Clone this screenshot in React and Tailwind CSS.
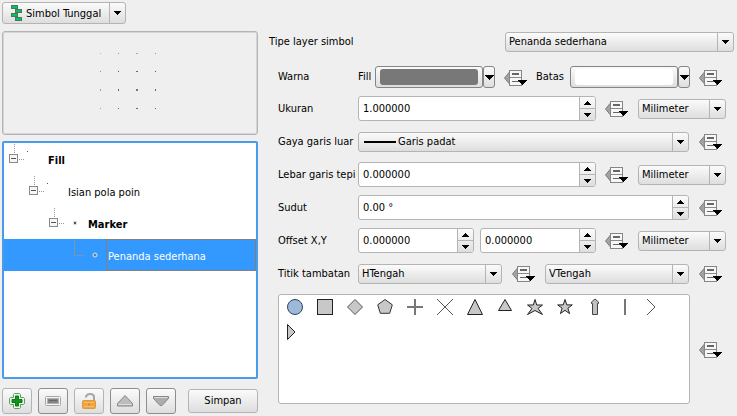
import React, { useState } from "react";

const FACE = "bg-gradient-to-b from-[#fbfbfb] to-[#dedede]";

function Caret({ up = false }) {
  return (
    <svg width="7" height="4" viewBox="0 0 7 4" shapeRendering="crispEdges" aria-hidden="true">
      <path d={up ? "M3 0h1v1h1v1h1v1h1v1h-7v-1h1v-1h1v-1h1z" : "M0 0h7v1h-1v1h-1v1h-1v1h-1v-1h-1v-1h-1v-1h-1z"} fill="#000" />
    </svg>
  );
}

function Combo({ label, value, className = "", line = false }) {
  return (
    <div className={`pt-px ${className}`}>
      <div className={`relative h-5 rounded-[3px] border border-[#b4b4b4] ${FACE}`}>
        <select
          aria-label={label}
          className={`block h-full w-full appearance-none bg-transparent pr-5 outline-none ${line ? "pl-[39px]" : "pl-[3px]"}`}
        >
          <option>{value}</option>
        </select>
        {line && <span className="pointer-events-none absolute left-[5px] top-2 h-[2px] w-8 bg-black" />}
        <span className="pointer-events-none absolute inset-y-0 right-0 flex w-4 items-center justify-center border-l border-[#b4b4b4]">
          <Caret />
        </span>
      </div>
    </div>
  );
}

function Spin({ id, label, value }) {
  return (
    <div className="flex h-[25px] min-w-0 flex-1 overflow-hidden rounded-[3px] border border-[#b4b4b4] bg-white">
      <input id={id} aria-label={label} defaultValue={value} className="w-0 min-w-0 flex-1 pl-1 pt-px outline-none" />
      <div className={`flex w-4 flex-col border-l border-[#b4b4b4] ${FACE}`}>
        <button aria-label="Naik" className="flex flex-1 items-center justify-center border-b border-[#b4b4b4]">
          <Caret up />
        </button>
        <button aria-label="Turun" className="flex flex-1 items-center justify-center">
          <Caret />
        </button>
      </div>
    </div>
  );
}

function DataDefined() {
  return (
    <button aria-label="Penggantian data terdefinisi" className="shrink-0 pt-px">
      <svg width="23" height="16" viewBox="0 0 23 16" shapeRendering="crispEdges" className="block">
        <path d="M5.5 2L.5 8L5.5 14z" fill="#a2a2a2" stroke="#7c7c7c" shapeRendering="auto" />
        <rect x="5.5" y=".5" width="12" height="15" fill="#f7f7f7" stroke="#858585" />
        <rect x="8" y="3" width="7" height="2" fill="#666" />
        <rect x="6" y="7" width="11" height="1" fill="#8a8a8a" />
        <rect x="8" y="11" width="7" height="1" fill="#666" />
        <path d="M14 10h9v1h-1v1h-1v1h-1v1h-1v1h-1v-1h-1v-1h-1v-1h-1v-1h-1z" fill="#000" />
      </svg>
    </button>
  );
}

function ColorButton({ label, swatch }) {
  return (
    <div className="flex h-[22px] min-w-0 flex-1">
      <button aria-label={label} className={`min-w-0 flex-1 rounded-[3px] border border-[#858585] px-1 py-[2px] ${FACE}`}>
        <span className={`block h-4 rounded-[3px] ${swatch}`} />
      </button>
      <button
        aria-label={`${label} menu`}
        className={`flex w-3 items-center justify-center rounded-[3px] border border-[#858585] ${FACE}`}
      >
        <svg width="9" height="5" viewBox="0 0 9 5" shapeRendering="crispEdges" className="shrink-0" aria-hidden="true">
          <path d="M0 0h9v1h-1v1h-1v1h-1v1h-1v1h-1v-1h-1v-1h-1v-1h-1v-1h-1z" />
        </svg>
      </button>
    </div>
  );
}

function Row({ label, htmlFor, children }) {
  return (
    <div className="flex h-[33px] items-center">
      <label htmlFor={htmlFor} className="w-20 shrink-0 pt-px">
        {label}
      </label>
      {children}
    </div>
  );
}

const TREE = [
  { name: "Fill", bold: true, indent: "pl-0", dot: "tiny" },
  { name: "Isian pola poin", bold: false, indent: "pl-5", dot: "tiny" },
  { name: "Marker", bold: true, indent: "pl-10", dot: "small" },
  { name: "Penanda sederhana", bold: false, indent: "pl-[60px]", dot: "ring", leaf: true },
];

function Branch({ leaf, dot }) {
  return (
    <svg width="42" height="32" viewBox="0 0 42 32" shapeRendering="crispEdges" className="shrink-0" aria-hidden="true">
      {leaf ? (
        <path d="M10.5 1v15.500h10" fill="none" stroke="#b5936b" strokeDasharray="1 1" />
      ) : (
        <>
          <path d="M10.500 1v10M15 16.500h6" fill="none" stroke="#9a9a9a" strokeDasharray="1 1" />
          <rect x="5.500" y="11.500" width="8" height="8" rx="1" fill="#f6f6f6" stroke="#8a8a8a" />
          <rect x="7" y="15" width="5" height="1" fill="#555" />
        </>
      )}
      {dot === "tiny" && <rect x="23" y="8" width="1" height="1" fill="#555" />}
      {dot === "small" && (
        <>
          <rect x="29" y="14" width="4" height="4" fill="#dcdcdc" />
          <rect x="30" y="15" width="2" height="2" fill="#555" />
        </>
      )}
      {dot === "ring" && <circle cx="31" cy="16" r="2" fill="#5c7f9f" stroke="#d5e6f7" shapeRendering="auto" />}
    </svg>
  );
}

const DOTS = [
  [100, 22, 1, 1, "#b5b5b5"], [118, 22, 1, 1, "#909090"], [136, 22, 2, 1, "#a5a5a5"], [155, 22, 1, 1, "#909090"],
  [100, 40, 1, 1, "#909090"], [118, 40, 1, 1, "#555"], [136, 40, 2, 1, "#666"], [155, 40, 1, 1, "#555"],
  [100, 58, 1, 2, "#a5a5a5"], [118, 58, 1, 2, "#666"], [136, 58, 2, 2, "#777"], [155, 58, 1, 2, "#666"],
  [100, 77, 1, 1, "#a0a0a0"], [118, 77, 1, 1, "#666"], [136, 77, 2, 1, "#666"], [155, 77, 1, 1, "#666"],
];

const GREY = { fill: "#c8c8c8", stroke: "#222" };
const MARKERS = [
  ["Lingkaran", <circle cx="10" cy="10" r="7.500" fill="#9cb9d9" stroke="#2b4566" />],
  ["Persegi", <rect x="2.500" y="2.500" width="15" height="15" {...GREY} shapeRendering="crispEdges" />],
  ["Belah ketupat", <path d="M10 2.500L17.500 10L10 17.500L2.500 10z" {...GREY} stroke="#555" />],
  ["Segi lima", <path d="M10 2.500L17.300 7.800L14.700 16.300H5.300L2.700 7.800z" {...GREY} stroke="#333" />],
  ["Plus", <path d="M10 2v16M2 10h16" stroke="#777" strokeWidth="2" />],
  ["Silang", <path d="M2 2L18 18M18 2L2 18" stroke="#555" />],
  ["Segitiga", <path d="M10 2.500L17.500 17.500H2.500z" {...GREY} />],
  ["Segitiga sama sisi", <path d="M10 2.500L16.500 13.500H3.500z" {...GREY} />],
  ["Bintang", <path d="M10 2.500L11.700 8H17.500L13 11.500L17.500 17.500L10 13.500L2.500 17.500L7 11.500L2.500 8H8.300z" {...GREY} />],
  ["Bintang biasa", <path d="M10 2.500L11.800 7.900H17.300L12.900 11.200L14.600 16.600L10 13.300L5.400 16.600L7.100 11.200L2.700 7.900H8.200z" {...GREY} />],
  ["Panah", <path d="M10 2L13.500 5V6.500H12.500V17.500H7.500V6.500H6.500V5z" {...GREY} fill="#c0c0c0" stroke="#444" />],
  ["Garis", <path d="M10 2v16" stroke="#777" strokeWidth="2" />],
  ["Kepala panah", <path d="M2 2L10 10L2 18" fill="none" stroke="#555" />],
  ["Kepala panah terisi", <path d="M2.500 2.500L10 10L2.500 17.500z" {...GREY} />],
];

const TOOLS = [
  ["Tambah", "border-[#b4b4b4]",
    <>
      <path d="M5.500 .5h5l1 1v3h3l1 1v5l-1 1h-3v3l-1 1h-5l-1-1v-3h-3l-1-1v-5l1-1h3v-3z" fill="#e6f3e6" stroke="#5e9a64" />
      <path d="M6.500 3h3v3.500h3.500v3h-3.500v3.500h-3v-3.500h-3.500v-3h3.500z" fill="#12911b" stroke="#08790f" />
    </>],
  ["Hapus", "border-[#8e8e8e]",
    <>
      <rect x=".5" y="3.500" width="15" height="9" rx="1" fill="#f4f4f4" stroke="#a6a6a6" />
      <rect x="2.500" y="5.500" width="11" height="5" fill="#858585" stroke="#b0b0b0" />
      <path d="M4 7.500h8" stroke="#666" />
    </>],
  ["Kunci", "border-[#b4b4b4]",
    <>
      <path d="M5 4.500V3.500Q6 1 9 1Q13 1 13 4V8" fill="none" stroke="#a6a6a6" strokeWidth="2" />
      <rect x="1.500" y="7.500" width="13" height="8" rx="1" fill="#efa542" stroke="#dc9a3c" />
      <path d="M3 9.500h10M3 13.500h10" stroke="#f5bd6c" />
      <rect x="7" y="10" width="2" height="3" fill="#dd922c" />
    </>],
  ["Ke atas", "border-[#8e8e8e]",
    <>
      <path d="M8 2.500L15.500 10.500V13H.5V10.500z" fill="#bdbdbd" stroke="#858585" />
      <path d="M1.500 11.500h13" stroke="#dedede" />
    </>],
  ["Ke bawah", "border-[#8e8e8e]",
    <>
      <path d="M.5 3.500H15.500V5.500L9 12.500H7L.5 5.500z" fill="#adadad" stroke="#858585" />
      <path d="M1.500 4.500h13" stroke="#dedede" />
    </>],
];

export default function App() {
  const [selected, setSelected] = useState(3);
  const [marker, setMarker] = useState(0);

  return (
    <main className="flex min-h-screen bg-[#efefef] font-['DejaVu_Sans_Condensed','DejaVu_Sans',sans-serif] text-[11px] leading-4 text-black [font-stretch:condensed]">
      <section className="flex w-[258px] shrink-0 flex-col pb-[2px] pl-[2px] pt-[2px]">
        <div className={`relative h-[22px] w-[124px] rounded-[3px] border border-[#b4b4b4] ${FACE}`}>
          <select aria-label="Jenis simbol" className="block h-full w-full appearance-none bg-transparent pl-[23px] pt-px outline-none">
            <option>Simbol Tunggal</option>
          </select>
          <svg width="11" height="16" viewBox="0 0 11 16" shapeRendering="crispEdges" className="pointer-events-none absolute left-2 top-[2px]">
            <g fill="#10bb62" stroke="#3f7f5c">
              <rect x=".5" y=".5" width="6" height="3" />
              <rect x="4.500" y="4.500" width="6" height="3" />
              <rect x=".5" y="8.500" width="6" height="3" />
              <rect x="4.500" y="12.500" width="6" height="3" />
            </g>
          </svg>
          <span className="pointer-events-none absolute inset-y-0 right-0 flex w-4 items-center justify-center border-l border-[#b4b4b4]">
            <Caret />
          </span>
        </div>

        <div className="mt-[7px] flex h-[104px] justify-center rounded-[3px] border border-[#b4b4b4] p-px shadow-[inset_0_0_0_1px_#d6d6d6]">
          <svg width="252" height="100" viewBox="0 0 252 100" shapeRendering="crispEdges" role="img" aria-label="Pratinjau simbol">
            {DOTS.map(([x, y, w, h, c], i) => (
              <rect key={i} x={x - 4} y={y - 2} width={w} height={h} fill={c} />
            ))}
          </svg>
        </div>

        <ul className="mt-[6px] flex-1 rounded-[2px] border-2 border-[#4a9ceb] bg-white" role="tree">
          {TREE.map((node, i) => (
            <li key={node.name} role="treeitem" aria-selected={selected === i}>
              <button
                onClick={() => setSelected(i)}
                className={`flex h-8 w-full text-left ${node.indent} ${selected === i ? "bg-[#3399ff] text-white" : ""}`}
              >
                <Branch leaf={node.leaf} dot={node.dot} />
                <span
                  className={`flex h-full flex-1 items-center border border-dotted pl-px pt-[3px] ${selected === i ? "border-[#cc6600]" : "border-transparent"} ${node.bold ? "font-bold" : ""}`}
                >
                  {node.name}
                </span>
              </button>
            </li>
          ))}
        </ul>

        <div className="mt-[9px] flex items-center gap-[6px]">
          {TOOLS.map(([name, border, art]) => (
            <button
              key={name}
              aria-label={name}
              className={`flex h-[26px] w-[30px] items-center justify-center rounded-[3px] border ${border} ${FACE}`}
            >
              <svg width="16" height="16" viewBox="0 0 16 16">{art}</svg>
            </button>
          ))}
          <button className={`ml-[6px] h-6 flex-1 rounded-[3px] border border-[#b4b4b4] ${FACE}`}>Simpan</button>
        </div>
      </section>

      <section className="min-w-0 flex-1 pl-5 pr-[11px] pt-[31px]">
        <div className="-ml-[9px] -mr-2 flex items-center">
          <span className="flex-1 pt-px">Tipe layer simbol</span>
          <Combo label="Tipe layer simbol" value="Penanda sederhana" className="w-[229px]" />
        </div>

        <div className="mb-1 mt-[14px] flex items-center">
          <span className="w-20 shrink-0">Warna</span>
          <span className="w-[17px] shrink-0">Fill</span>
          <ColorButton label="Warna fill" swatch="bg-[#787878]" />
          <div className="mx-[9px] flex">
            <DataDefined />
          </div>
          <span className="w-[34px] shrink-0">Batas</span>
          <ColorButton label="Warna batas" swatch="bg-white" />
          <div className="ml-[9px] flex w-[27px]">
            <DataDefined />
          </div>
        </div>

        <Row label="Ukuran" htmlFor="ukuran">
          <Spin id="ukuran" value="1.000000" />
          <div className="ml-[9px] mr-[10px] flex">
            <DataDefined />
          </div>
          <Combo label="Satuan ukuran" value="Milimeter" className="w-[88px]" />
        </Row>
        <Row label="Gaya garis luar">
          <Combo label="Gaya garis luar" value="Garis padat" className="min-w-0 flex-1" line />
          <div className="ml-[10px] flex w-[27px]">
            <DataDefined />
          </div>
        </Row>
        <Row label="Lebar garis tepi" htmlFor="lebar">
          <Spin id="lebar" value="0.000000" />
          <div className="ml-[9px] mr-[10px] flex">
            <DataDefined />
          </div>
          <Combo label="Satuan lebar" value="Milimeter" className="w-[88px]" />
        </Row>
        <Row label="Sudut" htmlFor="sudut">
          <Spin id="sudut" value="0.00 °" />
          <div className="ml-[10px] flex w-[27px]">
            <DataDefined />
          </div>
        </Row>
        <Row label="Offset X,Y" htmlFor="offset-x">
          <div className="flex min-w-0 flex-1 gap-[6px]">
            <Spin id="offset-x" value="0.000000" />
            <Spin id="offset-y" label="Offset Y" value="0.000000" />
          </div>
          <div className="ml-[9px] mr-[10px] flex">
            <DataDefined />
          </div>
          <Combo label="Satuan offset" value="Milimeter" className="w-[88px]" />
        </Row>
        <Row label="Titik tambatan">
          <Combo label="Titik tambatan horizontal" value="HTengah" className="min-w-0 flex-1" />
          <div className="mx-[10px] flex">
            <DataDefined />
          </div>
          <Combo label="Titik tambatan vertikal" value="VTengah" className="min-w-0 flex-1" />
          <div className="ml-[10px] flex w-[27px]">
            <DataDefined />
          </div>
        </Row>

        <div className="mt-1 flex items-center">
          <div className="flex h-[110px] min-w-0 flex-1 flex-wrap content-start gap-x-[10px] gap-y-[5px] rounded-[3px] border border-[#b4b4b4] bg-white py-[2px] pl-[6px] pr-5">
            {MARKERS.map(([name, art], i) => (
              <button key={name} aria-label={name} aria-pressed={marker === i} onClick={() => setMarker(i)} className="h-5 w-5">
                <svg width="20" height="20" viewBox="0 0 20 20" className="block">{art}</svg>
              </button>
            ))}
          </div>
          <div className="ml-[9px] flex w-[27px]">
            <DataDefined />
          </div>
        </div>
      </section>
    </main>
  );
}
